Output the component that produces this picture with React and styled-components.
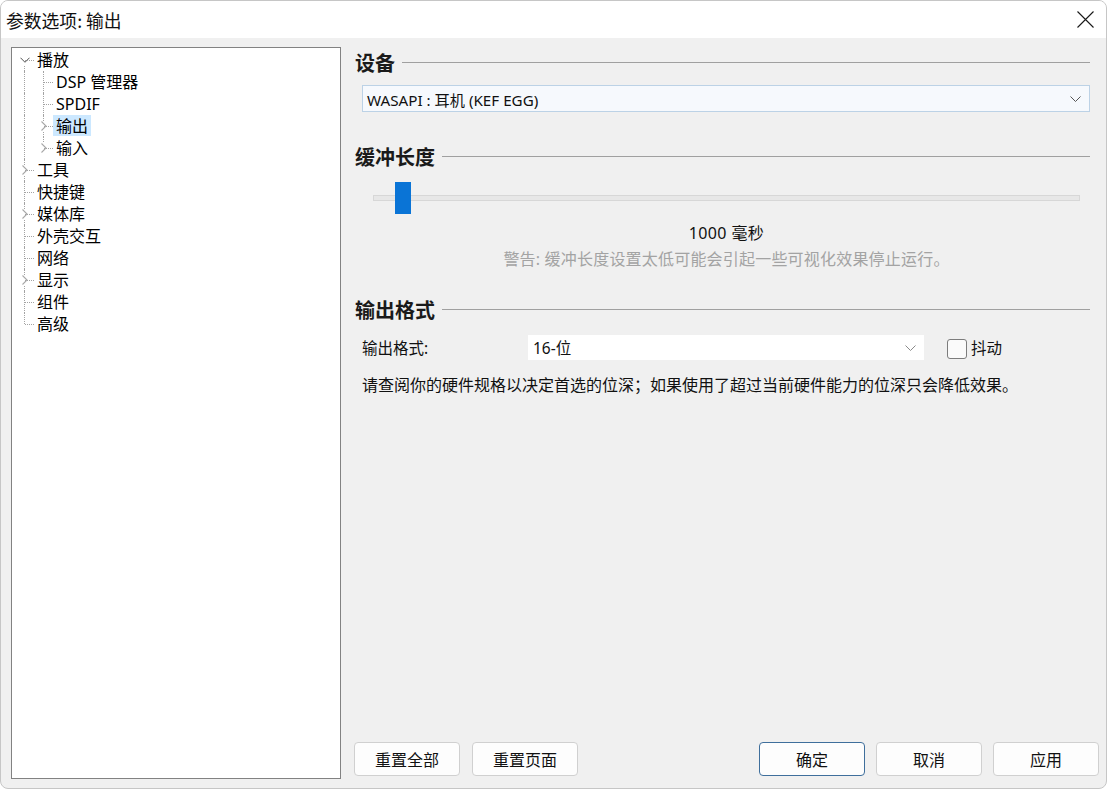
import React from "react";
import styled, { createGlobalStyle, css } from "styled-components";

const GlobalStyle = createGlobalStyle`
  html, body { margin: 0; padding: 0; background: #ffffff; }
  body {
    font-family: "Noto Sans", "Noto Sans CJK SC", sans-serif;
    color: #000;
  }
  * { box-sizing: border-box; }
`;

const Window = styled.div`
  width: 1107px;
  height: 789px;
  border: 1px solid #c6c6c6;
  border-radius: 8px;
  overflow: hidden;
  display: flex;
  flex-direction: column;
  background: #f0f0f0;
`;

const TitleBar = styled.div`
  height: 37px;
  flex-shrink: 0;
  background: #ffffff;
  display: flex;
  align-items: center;
  justify-content: space-between;
  padding-left: 5px;
`;

const TitleText = styled.div`
  font-family: "Noto Sans CJK SC", sans-serif;
  font-size: 17.8px;
  line-height: 20px;
  color: #111;
`;

const CloseButton = styled.div`
  width: 42px;
  height: 37px;
  display: flex;
  align-items: center;
  justify-content: center;
`;

const Body = styled.div`
  flex: 1;
  display: flex;
  gap: 13px;
  padding: 9px 7px 9px 10px;
  min-height: 0;
`;

const TreePanel = styled.div`
  width: 330px;
  flex-shrink: 0;
  background: #ffffff;
  border: 1px solid #828282;
  padding: 1px 0 0 3px;
  font-family: "Noto Sans", "Noto Sans CJK SC", sans-serif;
  font-size: 16px;
`;

const TreeRow = styled.div`
  height: 22px;
  display: flex;
  align-items: stretch;
`;

const GuideCell = styled.div`
  position: relative;
  width: 19px;
  flex-shrink: 0;
  ${(p) =>
    p.$vert &&
    css`
      &::before {
        content: "";
        position: absolute;
        left: 9px;
        top: ${p.$first ? "11px" : "0"};
        bottom: ${p.$last ? "11px" : "0"};
        border-left: 1px dotted #a3a3a3;
      }
    `}
  ${(p) =>
    p.$stub &&
    css`
      &::after {
        content: "";
        position: absolute;
        left: 10px;
        right: 0;
        top: 11px;
        border-top: 1px dotted #a3a3a3;
      }
    `}
`;

const Expander = styled.span`
  position: absolute;
  left: 5px;
  top: 6px;
  width: 10px;
  height: 10px;
  background: #ffffff;
  display: flex;
  align-items: center;
  justify-content: center;
`;

const NodeLabel = styled.span`
  display: flex;
  align-items: center;
  padding: 0 3px;
  margin-bottom: 1px;
  line-height: 20px;
  white-space: nowrap;
  background: ${(p) => (p.$selected ? "#cce8ff" : "transparent")};
`;

const RightColumn = styled.div`
  flex: 1;
  display: flex;
  flex-direction: column;
  padding-bottom: 3px;
  min-width: 0;
`;

const Content = styled.div`
  flex: 1;
  display: flex;
  flex-direction: column;
  padding-right: 9px;
  padding-left: 1px;
`;

const SectionHeading = styled.div`
  display: flex;
  align-items: center;
  gap: 7px;
  margin-top: ${(p) => p.$mt}px;
  height: 24px;
`;

const HeadingText = styled.div`
  font-family: "Noto Sans CJK SC", sans-serif;
  font-weight: 700;
  font-size: 20px;
  line-height: 24px;
  color: #1a1a1a;
`;

const HeadingRule = styled.div`
  flex: 1;
  height: 1px;
  margin-top: -1px;
  background: #a0a0a0;
`;

const DeviceSelect = styled.div`
  margin: 10px 0 0 7px;
  height: 27px;
  display: flex;
  align-items: center;
  justify-content: space-between;
  padding: 0 8px 0 4px;
  background: #f6f9fd;
  border: 1px solid #bcd2e6;
  font-size: 15.2px;
  color: #111;
`;

const SliderWrap = styled.div`
  position: relative;
  margin: 13px 10px 0 18px;
  height: 32px;
  display: flex;
  align-items: center;
`;

const SliderTrack = styled.div`
  flex: 1;
  height: 6px;
  background: #e7e7e7;
  border: 1px solid #d7d7d7;
`;

const SliderThumb = styled.div`
  position: absolute;
  top: 0;
  width: 16px;
  height: 32px;
  background: #0a74d6;
`;

const CenterText = styled.div`
  margin: ${(p) => p.$mt}px 10px 0 18px;
  text-align: center;
  font-size: 16px;
  letter-spacing: ${(p) => (p.$muted ? "0.2px" : "0.4px")};
  line-height: 20px;
  color: ${(p) => (p.$muted ? "#a3a3a3" : "#111")};
`;

const FormatRow = styled.div`
  margin: 13px 0 0 7px;
  height: 25px;
  display: flex;
  align-items: center;
`;

const FieldLabel = styled.div`
  width: 166px;
  font-size: 15.5px;
  color: #111;
`;

const FormatSelect = styled.div`
  width: 396px;
  height: 25px;
  background: #ffffff;
  display: flex;
  align-items: center;
  justify-content: space-between;
  padding: 0 8px 0 5px;
  font-size: 15.5px;
  color: #111;
`;

const CheckLabel = styled.label`
  margin-left: 23px;
  display: flex;
  align-items: center;
  gap: 4px;
  font-size: 15.5px;
  color: #111;
`;

const CheckBox = styled.span`
  width: 20px;
  height: 20px;
  border: 1px solid #7c7c7c;
  border-radius: 3px;
  background: #fafafa;
  margin-top: 2px;
`;

const Paragraph = styled.div`
  margin: 15px 0 0 7px;
  font-size: 16px;
  line-height: 20px;
  color: #111;
  white-space: nowrap;
`;

const ButtonBar = styled.div`
  height: 34px;
  display: flex;
  justify-content: space-between;
`;

const ButtonGroup = styled.div`
  display: flex;
  gap: ${(p) => p.$gap}px;
`;

const Button = styled.button`
  width: ${(p) => p.$w || 106}px;
  height: 34px;
  background: #fdfdfd;
  border: 1px solid ${(p) => (p.$primary ? "#3f6f9c" : "#d0d0d0")};
  border-radius: 4px;
  font-family: "Noto Sans CJK SC", sans-serif;
  font-size: 16px;
  color: #111;
  padding: 0;
`;

const ChevronDown = ({ color = "#555", w = 11 }) => (
  <svg width={w} height="6" viewBox="0 0 11 6" fill="none">
    <path d="M0.5 0.5 L5.5 5.5 L10.5 0.5" stroke={color} strokeWidth="1" />
  </svg>
);

const ChevronRight = ({ color = "#a8a8a8" }) => (
  <svg width="6" height="10" viewBox="0 0 6 10" fill="none">
    <path d="M0.5 0.5 L5 5 L0.5 9.5" stroke={color} strokeWidth="1.1" />
  </svg>
);

const CloseIcon = () => (
  <svg width="17" height="17" viewBox="0 0 17 17" fill="none">
    <path d="M0.5 0.5 L16.5 16.5 M16.5 0.5 L0.5 16.5" stroke="#1a1a1a" strokeWidth="1.1" />
  </svg>
);

const treeItems = [
  { label: "播放", depth: 0, expander: "open", first: true },
  { label: "DSP 管理器", depth: 1 },
  { label: "SPDIF", depth: 1 },
  { label: "输出", depth: 1, expander: "closed", selected: true },
  { label: "输入", depth: 1, expander: "closed", last: true },
  { label: "工具", depth: 0, expander: "closed" },
  { label: "快捷键", depth: 0 },
  { label: "媒体库", depth: 0, expander: "closed" },
  { label: "外壳交互", depth: 0 },
  { label: "网络", depth: 0 },
  { label: "显示", depth: 0, expander: "closed" },
  { label: "组件", depth: 0 },
  { label: "高级", depth: 0, last: true },
];

function TreeItem({ item }) {
  const cells = [];
  for (let i = 0; i < item.depth; i++) {
    cells.push(<GuideCell key={"g" + i} $vert />);
  }
  cells.push(
    <GuideCell
      key="own"
      $vert
      $stub
      $first={item.first}
      $last={item.last}
    >
      {item.expander && (
        <Expander>
          {item.expander === "open" ? (
            <ChevronDown color="#404040" w={10} />
          ) : (
            <ChevronRight />
          )}
        </Expander>
      )}
    </GuideCell>
  );
  return (
    <TreeRow>
      {cells}
      <NodeLabel $selected={item.selected}>{item.label}</NodeLabel>
    </TreeRow>
  );
}

export default function App() {
  const sliderPct = 3.1;
  return (
    <>
      <GlobalStyle />
      <Window>
        <TitleBar>
          <TitleText>参数选项: 输出</TitleText>
          <CloseButton>
            <CloseIcon />
          </CloseButton>
        </TitleBar>
        <Body>
          <TreePanel>
            {treeItems.map((it) => (
              <TreeItem key={it.label} item={it} />
            ))}
          </TreePanel>
          <RightColumn>
            <Content>
              <SectionHeading $mt={4}>
                <HeadingText>设备</HeadingText>
                <HeadingRule />
              </SectionHeading>
              <DeviceSelect>
                <span>WASAPI : 耳机 (KEF EGG)</span>
                <ChevronDown color="#555" />
              </DeviceSelect>

              <SectionHeading $mt={33}>
                <HeadingText>缓冲长度</HeadingText>
                <HeadingRule />
              </SectionHeading>
              <SliderWrap>
                <SliderTrack />
                <SliderThumb style={{ left: `${sliderPct}%` }} />
              </SliderWrap>
              <CenterText $mt={9}>1000 毫秒</CenterText>
              <CenterText $mt={6} $muted>
                警告: 缓冲长度设置太低可能会引起一些可视化效果停止运行。
              </CenterText>

              <SectionHeading $mt={29}>
                <HeadingText>输出格式</HeadingText>
                <HeadingRule />
              </SectionHeading>
              <FormatRow>
                <FieldLabel>输出格式:</FieldLabel>
                <FormatSelect>
                  <span>16-位</span>
                  <ChevronDown color="#8a8a8a" />
                </FormatSelect>
                <CheckLabel>
                  <CheckBox />
                  抖动
                </CheckLabel>
              </FormatRow>
              <Paragraph>
                请查阅你的硬件规格以决定首选的位深；如果使用了超过当前硬件能力的位深只会降低效果。
              </Paragraph>
            </Content>
            <ButtonBar>
              <ButtonGroup $gap={12}>
                <Button $w={106}>重置全部</Button>
                <Button $w={106}>重置页面</Button>
              </ButtonGroup>
              <ButtonGroup $gap={11}>
                <Button $primary>确定</Button>
                <Button>取消</Button>
                <Button>应用</Button>
              </ButtonGroup>
            </ButtonBar>
          </RightColumn>
        </Body>
      </Window>
    </>
  );
}
